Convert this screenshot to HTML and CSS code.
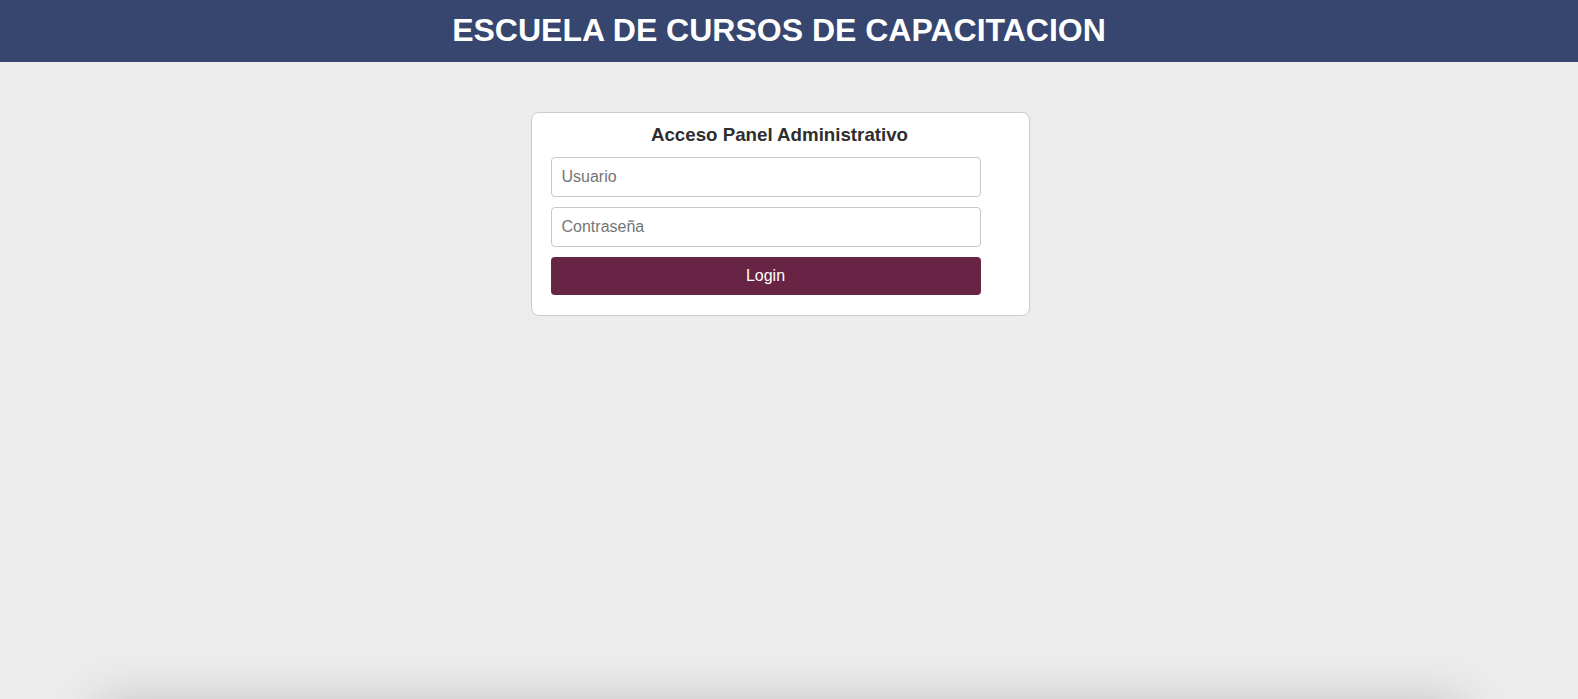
FILE: index.html
```html
<!DOCTYPE html>
<html lang="es">
<head>
<meta charset="utf-8">
<title>Escuela de Cursos de Capacitacion</title>
<link rel="stylesheet" href="styles.css">
</head>
<body>
<header class="topbar">
  <h1 class="topbar-title">ESCUELA DE CURSOS DE CAPACITACION</h1>
</header>
<main class="page">
  <section class="login-card">
    <h2 class="login-title">Acceso Panel Administrativo</h2>
    <form class="login-form">
      <input class="field" type="text" placeholder="Usuario">
      <input class="field" type="password" placeholder="Contraseña">
      <button class="btn-login" type="button">Login</button>
    </form>
  </section>
</main>
<footer class="footer-box"></footer>
</body>
</html>
```
FILE: styles.css
```css
html, body {
  margin: 0;
  padding: 0;
}
body {
  background: #ececec;
  font-family: "Liberation Sans", Arial, Helvetica, sans-serif;
  overflow: hidden;
}
.topbar {
  background: #36466e;
  height: 62px;
  display: flex;
  align-items: center;
  justify-content: center;
  padding-right: 20px;
}
.topbar-title {
  margin: 0;
  color: #ffffff;
  font-size: 32px;
  font-weight: bold;
  line-height: 1;
  padding-bottom: 2px;
}
.page {
  display: flex;
  justify-content: center;
  padding-top: 50px;
  padding-right: 18px;
}
.login-card {
  box-sizing: border-box;
  width: 499px;
  height: 204px;
  background: #ffffff;
  border: 1px solid #cccccc;
  border-radius: 8px;
  padding: 11px 20px 20px 19px;
}
.login-title {
  margin: 0 0 11px;
  text-align: center;
  font-size: 18.72px;
  font-weight: bold;
  color: #2e2e2e;
  line-height: 22px;
}
.login-form {
  width: 430px;
  display: flex;
  flex-direction: column;
  gap: 10px;
}
.field {
  box-sizing: border-box;
  width: 100%;
  height: 40px;
  border: 1px solid #c8c8c8;
  border-radius: 4px;
  padding: 0 10px;
  font-family: "Liberation Sans", Arial, Helvetica, sans-serif;
  font-size: 16px;
  color: #333;
  background: #fff;
  outline: none;
}
.field::placeholder {
  color: #757575;
}
.btn-login {
  box-sizing: border-box;
  width: 100%;
  height: 38px;
  border: none;
  border-radius: 4px;
  background: #682444;
  color: #ffffff;
  font-family: "Liberation Sans", Arial, Helvetica, sans-serif;
  font-size: 16px;
  cursor: pointer;
}
.footer-box {
  height: 200px;
  margin: 390px 118px 0 100px;
  background: #ececec;
  box-shadow: 0 0 50px rgba(0, 0, 0, 0.22);
}
```
